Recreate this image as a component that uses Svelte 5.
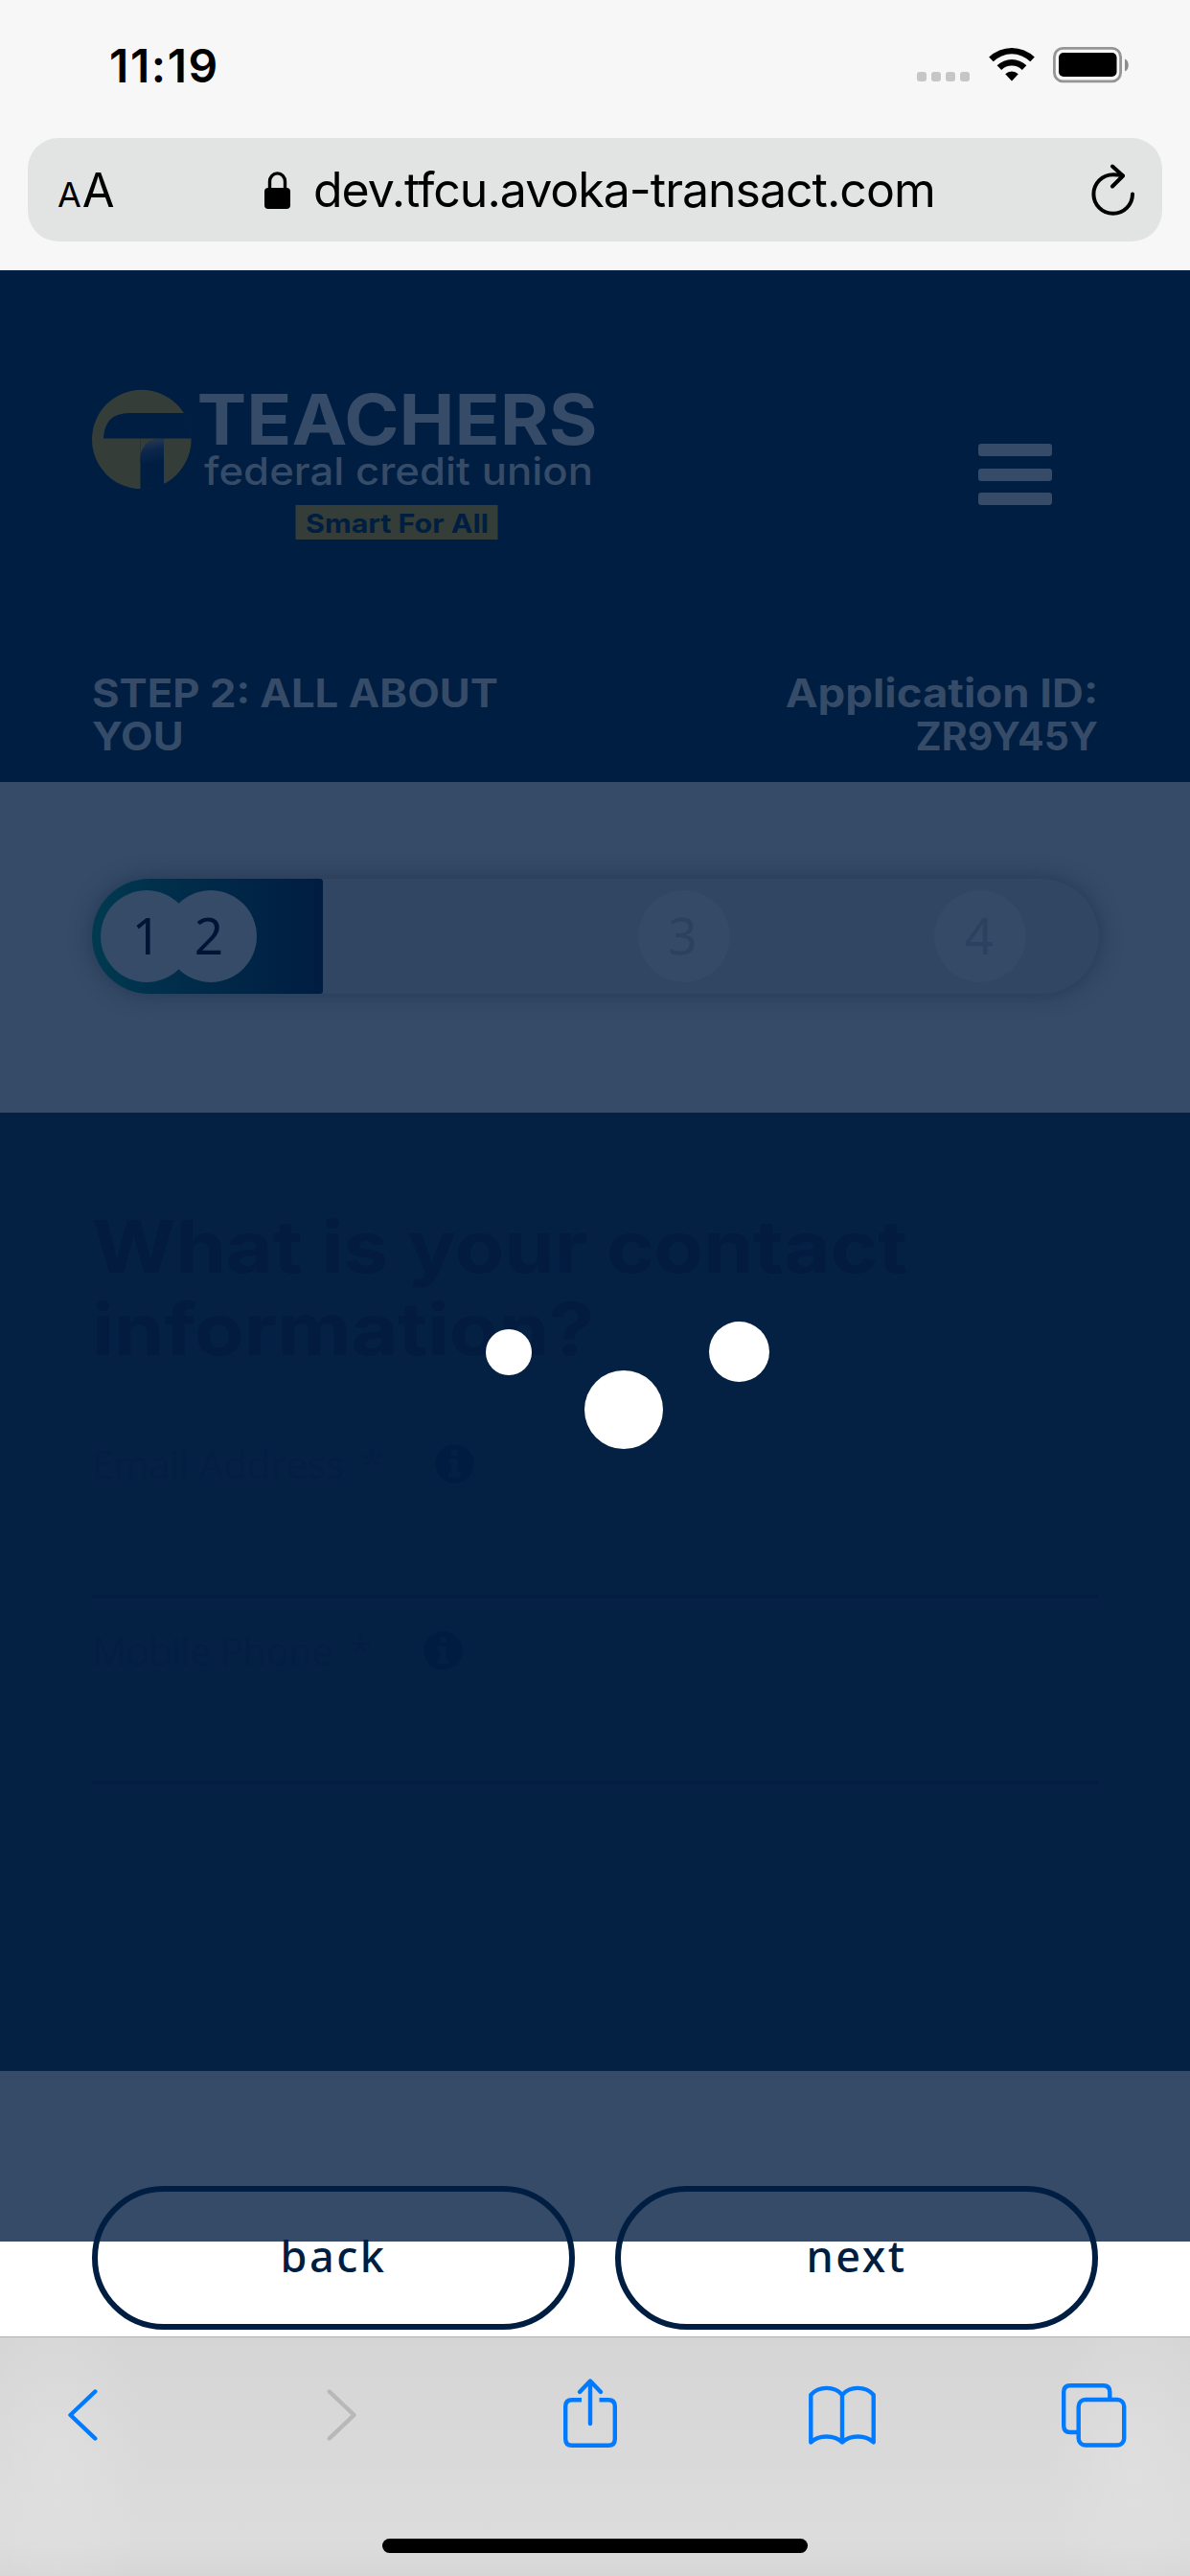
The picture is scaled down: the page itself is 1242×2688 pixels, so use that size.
<script>
  const steps = [
    { label: '1', cls: 'one', done: true },
    { label: '2', cls: 'two', done: true },
    { label: '3', cls: 'three', done: false },
    { label: '4', cls: 'four', done: false }
  ];
  const fields = [
    { label: 'Email Address', cls: 'email' },
    { label: 'Mobile Phone', cls: 'mobile' }
  ];
</script>

<div class="screen">
  <header class="chrome">
    <div class="status">
      <span class="time">11:19</span>
      <div class="indicators">
        <div class="dots"><i></i><i></i><i></i><i></i></div>
        <svg class="wifi" viewBox="0 0 48 36" width="48" height="36">
          <path d="M0.2 10.6a34 34 0 0 1 47.6 0l-4.5 4.7a27.4 27.4 0 0 0-38.6 0z" />
          <path d="M8.6 19.3a22 22 0 0 1 30.8 0l-4.6 4.7a15.4 15.4 0 0 0-21.6 0z" />
          <path d="M17.2 28.3a9.8 9.8 0 0 1 13.6 0L24 35.6z" />
        </svg>
        <svg class="battery" viewBox="0 0 80 38" width="80" height="38">
          <rect x="1.4" y="1.4" width="69.2" height="34.4" rx="9" fill="none" stroke="#959595" stroke-width="2.8" />
          <rect x="6" y="6" width="60.5" height="25" rx="5" />
          <path d="M75 12.500c5 2 5 11 0 13z" fill="#8c8c8c" />
        </svg>
      </div>
    </div>
    <div class="urlbar">
      <span class="aa"><small>A</small>A</span>
      <div class="address">
        <svg viewBox="0 0 27 39" width="27" height="39">
          <rect x="0" y="17" width="27" height="22" rx="4" />
          <path d="M5.500 19V10.500a8 8.600 0 0 1 16 0V19" fill="none" stroke="#000" stroke-width="3.400" />
        </svg>
        <span>dev.tfcu.avoka-transact.com</span>
      </div>
      <svg class="reload" viewBox="0 0 46 54" width="46" height="54" fill="none" stroke="#000" stroke-width="4" stroke-linecap="round" stroke-linejoin="round">
        <path d="M43 31.500A20.300 20.300 0 1 1 22.700 11.200q5 0 10 1.100" />
        <path d="M22 2.500l11 10-11 11" />
      </svg>
    </div>
  </header>

  <section class="masthead">
    <div class="brand">
      <svg class="logo" viewBox="96 407 528 158" width="528" height="158">
        <defs>
          <clipPath id="disc"><circle cx="147.800" cy="458.500" r="52" /></clipPath>
          <linearGradient id="shine" x1="0.400" y1="0" x2="0.600" y2="1">
            <stop offset="0" stop-color="#2b3a52" />
            <stop offset="0.450" stop-color="#0d274c" />
            <stop offset="1" stop-color="#001e41" />
          </linearGradient>
        </defs>
        <circle cx="147.800" cy="458.500" r="51.800" fill="#343d37" />
        <g clip-path="url(#disc)">
          <path d="M108 457.500q1-26.500 27-26.500h70v26.500h-34v60h-24.500v-60z" fill="#001e41" />
          <path d="M146.500 457.500h24.500q-22 0-24.500 20z" fill="#343d37" />
          <path d="M146.500 478q2-20.500 24.500-20.500v26h-24.500z" fill="url(#shine)" />
        </g>
        <g font-family="Inter, sans-serif" fill="#354b67">
          <text x="205.500" y="463.500" font-size="73" font-weight="700" textLength="418" lengthAdjust="spacingAndGlyphs">TEACHERS</text>
          <text x="213" y="505.500" font-size="40" font-weight="500" textLength="406" lengthAdjust="spacingAndGlyphs">federal credit union</text>
        </g>
        <rect x="308.500" y="527" width="211" height="36" fill="#343d37" />
        <text x="319" y="555.500" font-family="Inter, sans-serif" font-weight="700" font-size="27.500" fill="#001e41" textLength="191" lengthAdjust="spacingAndGlyphs">Smart For All</text>
      </svg>
      <div class="burger"><i></i><i></i><i></i></div>
    </div>
    <div class="titles">
      <div class="step"><span>STEP 2: ALL ABOUT</span><br /><span>YOU</span></div>
      <div class="appid"><span class="wide">Application ID:</span><br /><span class="code">ZR9Y45Y</span></div>
    </div>
  </section>

  <section class="progress">
    <div class="track">
      <div class="fill"></div>
      {#each steps as s}
        <span class="knob {s.cls}" class:todo={!s.done}>{s.label}</span>
      {/each}
    </div>
  </section>

  <section class="form">
    <h1><span>What is your contact</span><br /><span>information?</span></h1>
    {#each fields as f}
      <div class="field {f.cls}">
        <div class="label">
          <span class="name">{f.label}</span>
          <span class="star">*</span>
          <svg viewBox="0 0 42 42" width="41" height="41">
            <circle cx="21" cy="21" r="20.500" fill="#001c40" />
            <path d="M17.500 6.500h7v6h-7zM15 16h9.500v14H27.500v5H14.500v-5h3v-9H15z" fill="#042144" />
          </svg>
        </div>
      </div>
    {/each}
    <div class="loader"><i class="a"></i><i class="b"></i><i class="c"></i></div>
  </section>

  <section class="actions">
    <button class="back">back</button>
    <button class="next">next</button>
  </section>

  <footer class="toolbar">
    <nav>
      <svg viewBox="0 0 31 54" width="31" height="54"><path d="M28.300 2.500L2.500 27l25.800 24.500" /></svg>
      <svg class="off" viewBox="0 0 31 54" width="31" height="54"><path d="M2.700 2.500L28.500 27l-25.800 24.500" /></svg>
      <svg viewBox="0 0 56 72" width="56" height="72">
        <path d="M19 22.200H9q-6.800 0-6.800 6.800v34q0 6.800 6.800 6.800h38q6.800 0 6.800-6.800V29q0-6.800-6.800-6.800H37.500" stroke-linecap="butt" />
        <path d="M28 47V3M17 14L28 2.500 39 14" />
      </svg>
      <svg viewBox="0 0 70 62" width="70" height="62">
        <path d="M35 59.500V10C27 .500 10.500 .500 2.300 10v49.500c8.200-8 24.500-8 32.700 0 8.200-8 24.500-8 32.700 0V10C59.500.500 43 .500 35 10" />
      </svg>
      <svg viewBox="0 0 68 67" width="68" height="67">
        <path d="M16 51H9q-6.800 0-6.800-6.800V9q0-6.800 6.800-6.800h34.500q6.800 0 6.800 6.800v6" stroke-linecap="butt" />
        <rect x="17.700" y="17" width="47.500" height="47.500" rx="7" />
      </svg>
    </nav>
    <div class="home"></div>
  </footer>
</div>

<style>
  :global(body) { margin: 0; background: #fff; }
  .screen { width: 1242px; height: 2688px; overflow: hidden; display: flex; flex-direction: column; font-family: Inter, sans-serif; color: #000; }
  .screen > * { box-sizing: border-box; flex: none; }
  i { display: block; }

  .chrome { height: 282px; background: #f7f7f7; }
  .status { height: 138px; display: flex; align-items: center; justify-content: space-between; padding: 0 63px 0 114px; }
  .time { font-size: 48px; font-weight: 600; letter-spacing: 1.6px; padding-bottom: 2px; }
  .indicators { display: flex; align-items: flex-end; height: 40px; padding-bottom: 3px; }
  .dots { display: flex; gap: 5px; margin: 0 20px 3px 0; }
  .dots i { width: 10px; height: 10px; border-radius: 3px; background: #c6c6c6; }
  .wifi { margin: 0 19px 3px 0; }
  .battery { margin-bottom: 1px; }
  .urlbar { margin: 6px 29px 0; height: 108px; border-radius: 32px; background: #e2e4e3; display: flex; align-items: center; box-sizing: border-box; padding: 0 28px 0 31px; }
  .aa { font-size: 49px; width: 216px; white-space: nowrap; }
  .aa small { font-size: 36px; margin-right: 1px; }
  .address { display: flex; align-items: center; gap: 24px; flex: 1; font-size: 50px; letter-spacing: -1px; white-space: nowrap; }

  .masthead { height: 534px; background: #001e41; padding: 125px 96px 0; color: #354b67; }
  .brand { display: flex; justify-content: space-between; height: 158px; }
  .logo { overflow: visible; }
  .burger { width: 77px; margin: 56px 48px 0 0; display: flex; flex-direction: column; gap: 12.500px; }
  .burger i { height: 13px; border-radius: 3px; background: #354b67; }
  .titles { display: flex; justify-content: space-between; margin-top: 135.500px; font-size: 41px; line-height: 45px; font-weight: 700; white-space: nowrap; }
  .titles span { display: inline-block; transform: scaleX(1.065); transform-origin: 0 50%; }
  .titles .appid { text-align: right; }
  .titles .wide { transform: scaleX(1.11); transform-origin: 100% 50%; }
  .titles .code { transform: none; }

  .progress { height: 345px; background: #354b67; padding: 101px 95px 0 96px; }
  .track { position: relative; height: 120px; border-radius: 60px; background: #314662; box-shadow: 0 0 22px rgba(20, 36, 66, 0.5); }
  .fill { width: 241px; height: 120px; border-radius: 60px 3px 3px 60px; background: linear-gradient(90deg, #003a50, #002c4a 40%, #001d41); }
  .knob { position: absolute; top: 12px; width: 96px; height: 96px; border-radius: 50%; background: #354b67; color: #001536; font: 400 53px/94px "Noto Sans", sans-serif; text-align: center; }
  .one { left: 9px; }
  .two { left: 76px; text-indent: -4px; }
  .three { left: 570px; text-indent: -3px; }
  .four { left: 879px; text-indent: -2px; }
  .todo { background: #344a66; color: #2c4160; }

  .form { position: relative; height: 1000px; background: #042144; padding: 97px 96px 0; }
  h1 { margin: 0; height: 249px; font-size: 75px; line-height: 86px; font-weight: 700; color: #021b3f; white-space: nowrap; }
  h1 span { display: inline-block; transform: scaleX(1.123); transform-origin: 0 50%; }
  .field { box-sizing: border-box; border-bottom: 4px solid #021d41; font-family: "Open Sans", sans-serif; color: #031e42; }
  .email { height: 161px; }
  .mobile { height: 194px; padding-top: 34px; }
  .mobile .name { letter-spacing: -0.5px; }
  .label { display: flex; height: 41px; align-items: center; font-size: 40px; line-height: 41px; white-space: nowrap; }
  .star { margin-left: 18px; }
  .label svg { margin-left: 55px; }
  .loader i { position: absolute; border-radius: 50%; background: #fff; }
  .loader .a { left: 507px; top: 226px; width: 48px; height: 48px; }
  .loader .b { left: 610px; top: 269px; width: 82px; height: 82px; }
  .loader .c { left: 740px; top: 218px; width: 63px; height: 63px; }

  .actions { height: 277px; display: flex; gap: 42px; padding: 120px 96px 0; background: linear-gradient(#354b67 178px, #fff 178px); }
  button { flex: 1; height: 150px; box-sizing: border-box; border: 6px solid #001e41; border-radius: 75px; background: none; color: #001e41; font: 500 45px "Noto Sans", sans-serif; letter-spacing: 2.5px; padding: 0 0 5px; }

  .toolbar { height: 250px; border-top: 1.500px solid #b0b0b0; padding-top: 43px; background:
    radial-gradient(ellipse 90px 200px at 60px 140px, rgba(228, 228, 228, 0.5), transparent),
    radial-gradient(ellipse 90px 200px at 1185px 140px, rgba(228, 228, 228, 0.5), transparent),
    linear-gradient(#d5d5d5, #d9d9d9 45%, #dcdcdc 85%, #d6d6d6); }
  nav { height: 76px; display: flex; align-items: center; padding: 0 66px 0 71px; }
  nav svg { fill: none; stroke: #007aff; stroke-width: 4.400; stroke-linecap: round; stroke-linejoin: round; overflow: visible; }
  nav svg:nth-child(2) { margin-left: 239px; }
  nav svg:nth-child(3) { margin: -4px 0 0 216px; }
  nav svg:nth-child(4) { margin-left: 200px; }
  nav svg:nth-child(5) { margin-left: 194px; }
  nav .off { stroke: #b8b8b8; }
  .home { width: 444px; height: 15px; border-radius: 8px; background: #000; margin: 91px auto 0; }
</style>
